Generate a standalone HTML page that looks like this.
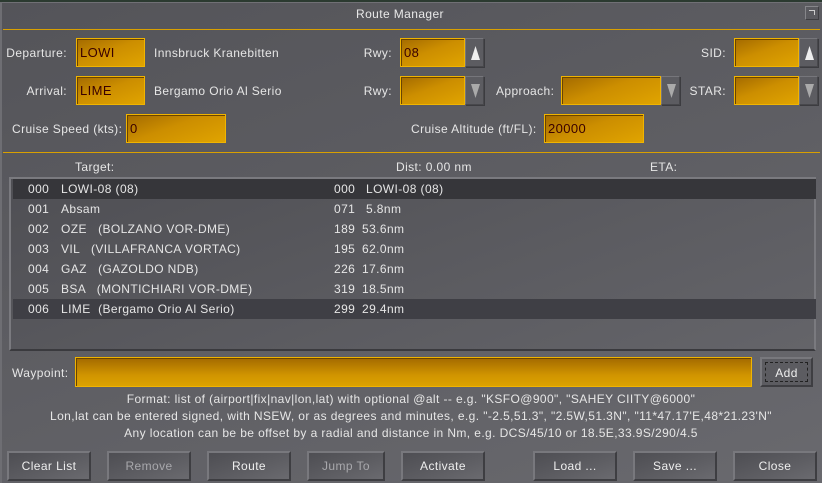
<!DOCTYPE html>
<html><head><meta charset="utf-8"><style>
*{margin:0;padding:0;box-sizing:border-box}
body{width:822px;height:483px;overflow:hidden;background:#5a5a5f;font-family:"Liberation Sans","DejaVu Sans",sans-serif;font-size:12px;letter-spacing:0.4px;color:#e6e6e6;position:relative}
#dlg{position:absolute;left:0;top:2px;width:822px;height:481px;background:linear-gradient(160deg,#545459 0%,#5e5e63 50%,#69696e 100%);border-left:2px solid #6e6e73;border-top:1px solid #707075}
.a{position:absolute;white-space:nowrap}
.r{text-align:right}
.hl{position:absolute;height:1px;background:#d9a000}
.in{position:absolute;background:linear-gradient(160deg,#a36a00 0%,#cc8e00 45%,#e0a400 100%);border:1px solid #f0b400;box-shadow:inset 1px 1px 0 #6a4400;color:#3a0000;font-size:13px;padding:6px 0 0 3px}
.ab{position:absolute;width:19px;background:#5c5c61;border:1px solid #48484c;border-top-color:#76767b;border-left-color:#76767b;box-shadow:1px 1px 0 #3c3c40}
.ab svg{position:absolute;left:4px;top:7px}
.bt{position:absolute;height:30px;top:451px;background:linear-gradient(160deg,#4e4e53,#5e5e63 60%,#6a6a6f);border:2px solid #3e3e42;border-top-color:#78787d;border-left-color:#78787d;text-align:center;line-height:26px;color:#eee;font-size:12px}
.dis{color:#a8a8ac}
.row{position:absolute;left:2px;width:803px;height:20px}
.row span{position:absolute;top:3px;white-space:nowrap}
</style></head><body>
<div style="position:absolute;left:0;top:0;width:822px;height:2px;background:#2b3a30"></div>
<div id="dlg"></div>
<div class="a" style="left:0;width:800px;top:7px;text-align:center;color:#e8e8e8">Route Manager</div>
<div style="position:absolute;left:805px;top:6px;width:14px;height:14px;background:#5a5a5f;border:1px solid #3e3e42;border-top-color:#86868a;border-left-color:#86868a"><div style="position:absolute;left:3px;top:3px;width:6px;height:5px;border-top:1px solid #ccc;border-right:1px solid #ccc"></div></div>
<div class="hl" style="left:3px;top:29px;width:817px"></div>

<div class="a r" style="left:0;width:67px;top:46px">Departure:</div>
<div class="in" style="left:76px;top:38px;width:69px;height:29px">LOWI</div>
<div class="a" style="left:154px;top:46px">Innsbruck Kranebitten</div>
<div class="a r" style="left:300px;width:92px;top:46px">Rwy:</div>
<div class="in" style="left:400px;top:38px;width:65px;height:29px">08</div>
<div class="ab" style="left:465px;top:38px;height:29px"><svg width="11" height="14"><polygon points="5.5,0 10,14 1,14" fill="#eee"/></svg></div>
<div class="a r" style="left:650px;width:76px;top:46px">SID:</div>
<div class="in" style="left:734px;top:38px;width:65px;height:29px"></div>
<div class="ab" style="left:799px;top:38px;height:29px"><svg width="11" height="14"><polygon points="5.5,0 10,14 1,14" fill="#eee"/></svg></div>

<div class="a r" style="left:0;width:67px;top:84px">Arrival:</div>
<div class="in" style="left:76px;top:76px;width:69px;height:29px">LIME</div>
<div class="a" style="left:154px;top:84px">Bergamo Orio Al Serio</div>
<div class="a r" style="left:300px;width:92px;top:84px">Rwy:</div>
<div class="in" style="left:400px;top:76px;width:65px;height:29px"></div>
<div class="ab" style="left:465px;top:76px;height:29px"><svg width="11" height="14"><polygon points="1,0 10,0 5.5,14" fill="#aaa"/></svg></div>
<div class="a" style="left:496px;top:84px">Approach:</div>
<div class="in" style="left:561px;top:76px;width:100px;height:29px"></div>
<div class="ab" style="left:661px;top:76px;height:29px"><svg width="11" height="14"><polygon points="1,0 10,0 5.5,14" fill="#aaa"/></svg></div>
<div class="a r" style="left:650px;width:76px;top:84px">STAR:</div>
<div class="in" style="left:734px;top:76px;width:65px;height:29px"></div>
<div class="ab" style="left:799px;top:76px;height:29px"><svg width="11" height="14"><polygon points="1,0 10,0 5.5,14" fill="#aaa"/></svg></div>

<div class="a" style="left:12px;top:122px">Cruise Speed (kts):</div>
<div class="in" style="left:126px;top:114px;width:100px;height:29px">0</div>
<div class="a" style="left:411px;top:122px">Cruise Altitude (ft/FL):</div>
<div class="in" style="left:544px;top:114px;width:100px;height:29px">20000</div>

<div class="hl" style="left:3px;top:152px;width:817px"></div>
<div class="a" style="left:75px;top:160px">Target:</div>
<div class="a" style="left:396px;top:160px">Dist: 0.00 nm</div>
<div class="a" style="left:650px;top:160px">ETA:</div>

<div style="position:absolute;left:9px;top:177px;width:807px;height:174px;background:linear-gradient(160deg,#4f4f54,#5c5c61 60%,#646469);border:2px solid #3a3a3e;border-top-color:#7a7a7f;border-left-color:#7a7a7f;border-right-color:#7a7a7f">
<div class="row" style="top:0;background:#36363a"><span style="left:15px">000</span><span style="left:48px">LOWI-08 (08)</span><span style="left:321px">000</span><span style="left:353px">LOWI-08 (08)</span></div>
<div class="row" style="top:20px"><span style="left:15px">001</span><span style="left:48px">Absam</span><span style="left:321px">071</span><span style="left:353px">5.8nm</span></div>
<div class="row" style="top:40px"><span style="left:15px">002</span><span style="left:48px">OZE &nbsp; (BOLZANO VOR-DME)</span><span style="left:321px">189</span><span style="left:349px">53.6nm</span></div>
<div class="row" style="top:60px"><span style="left:15px">003</span><span style="left:48px">VIL &nbsp; (VILLAFRANCA VORTAC)</span><span style="left:321px">195</span><span style="left:349px">62.0nm</span></div>
<div class="row" style="top:80px"><span style="left:15px">004</span><span style="left:48px">GAZ &nbsp; (GAZOLDO NDB)</span><span style="left:321px">226</span><span style="left:349px">17.6nm</span></div>
<div class="row" style="top:100px"><span style="left:15px">005</span><span style="left:48px">BSA &nbsp; (MONTICHIARI VOR-DME)</span><span style="left:321px">319</span><span style="left:349px">18.5nm</span></div>
<div class="row" style="top:120px;background:#3f3f45"><span style="left:15px">006</span><span style="left:48px">LIME &nbsp;(Bergamo Orio Al Serio)</span><span style="left:321px">299</span><span style="left:349px">29.4nm</span></div>
</div>

<div class="a" style="left:12px;top:366px">Waypoint:</div>
<div class="in" style="left:75px;top:357px;width:677px;height:30px;background:linear-gradient(180deg,#a36a00,#d09400 60%,#dca200)"></div>
<div style="position:absolute;left:760px;top:357px;width:53px;height:30px;background:#5c5c61;border:2px solid #3e3e42;border-top-color:#78787d;border-left-color:#78787d"><div style="position:absolute;left:3px;top:3px;right:3px;bottom:3px;border:1px dashed #222;text-align:center;line-height:20px;color:#eee">Add</div></div>

<div class="a" style="left:0;width:822px;text-align:center;top:392px">Format: list of (airport|fix|nav|lon,lat) with optional @alt -- e.g. "KSFO@900", "SAHEY CIITY@6000"</div>
<div class="a" style="left:0;width:822px;text-align:center;top:409px">Lon,lat can be entered signed, with NSEW, or as degrees and minutes, e.g. "-2.5,51.3", "2.5W,51.3N", "11*47.17'E,48*21.23'N"</div>
<div class="a" style="left:0;width:822px;text-align:center;top:426px">Any location can be be offset by a radial and distance in Nm, e.g. DCS/45/10 or 18.5E,33.9S/290/4.5</div>

<div class="bt" style="left:7px;width:84px">Clear List</div>
<div class="bt dis" style="left:107px;width:84px">Remove</div>
<div class="bt" style="left:207px;width:84px">Route</div>
<div class="bt dis" style="left:307px;width:78px">Jump To</div>
<div class="bt" style="left:401px;width:84px">Activate</div>
<div class="bt" style="left:533px;width:84px">Load ...</div>
<div class="bt" style="left:633px;width:84px">Save ...</div>
<div class="bt" style="left:733px;width:84px">Close</div>
</body></html>
